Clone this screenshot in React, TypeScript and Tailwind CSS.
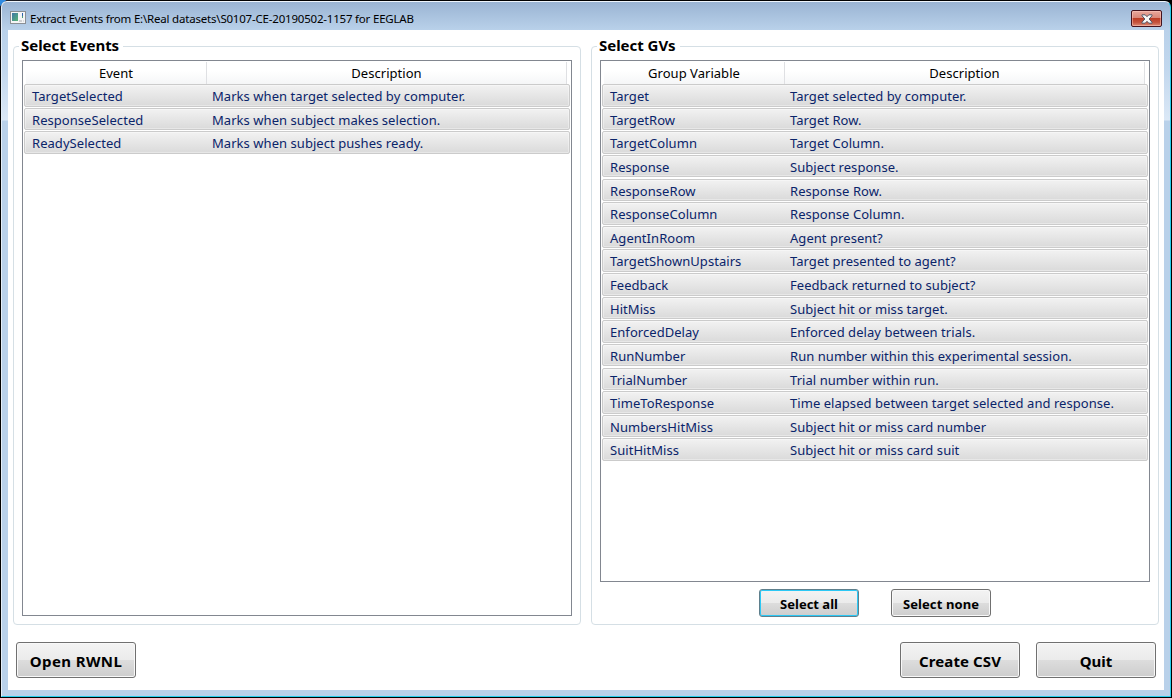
import type { ReactNode } from "react";

type Row = [string, string];

const events: Row[] = [
  ["TargetSelected", "Marks when target selected by computer."],
  ["ResponseSelected", "Marks when subject makes selection."],
  ["ReadySelected", "Marks when subject pushes ready."],
];

const variables: Row[] = [
  ["Target", "Target selected by computer."],
  ["TargetRow", "Target Row."],
  ["TargetColumn", "Target Column."],
  ["Response", "Subject response."],
  ["ResponseRow", "Response Row."],
  ["ResponseColumn", "Response Column."],
  ["AgentInRoom", "Agent present?"],
  ["TargetShownUpstairs", "Target presented to agent?"],
  ["Feedback", "Feedback returned to subject?"],
  ["HitMiss", "Subject hit or miss target."],
  ["EnforcedDelay", "Enforced delay between trials."],
  ["RunNumber", "Run number within this experimental session."],
  ["TrialNumber", "Trial number within run."],
  ["TimeToResponse", "Time elapsed between target selected and response."],
  ["NumbersHitMiss", "Subject hit or miss card number"],
  ["SuitHitMiss", "Subject hit or miss card suit"],
];

function WindowIcon() {
  return (
    <svg width="16" height="13" viewBox="0 0 16 13" className="block" shapeRendering="crispEdges">
      <defs>
        <linearGradient id="pane" x1="0" y1="0" x2="1" y2="1">
          <stop offset="0" stopColor="#3f76a8" />
          <stop offset="1" stopColor="#58b574" />
        </linearGradient>
      </defs>
      <rect width="16" height="13" fill="#8b8f94" />
      <rect x="1" y="1" width="14" height="11" fill="#f4f5f6" />
      <rect x="2" y="2" width="6" height="8" fill="url(#pane)" />
      <rect x="12" y="2" width="1" height="4" fill="#2e62ad" />
      <rect x="12" y="5" width="1" height="2" fill="#4d9b78" />
      <rect x="9" y="9" width="3" height="2" fill="#cfd1d3" />
      <rect x="13" y="9" width="1" height="2" fill="#dcdddf" />
    </svg>
  );
}

function CloseButton() {
  return (
    <button
      aria-label="Close"
      className="flex h-[17px] w-[31px] items-center justify-center rounded-[2px] border border-[#43131e] bg-[linear-gradient(#e8a89d,#d98678_47%,#bc3b24_47%,#c4523c_75%,#dc8b75)] shadow-[inset_0_0_0_1px_rgba(255,205,195,0.5)]"
    >
      <svg width="12" height="10" viewBox="0 0 12 10">
        <path
          d="M1 .8h3.2L6 2.7 7.8.8H11v1L8.1 5 11 8.2v1H7.8L6 7.3 4.2 9.2H1v-1L3.9 5 1 1.8z"
          fill="#f7f7f7"
          stroke="#535666"
          strokeWidth="1"
        />
      </svg>
    </button>
  );
}

function EventTable({ heading, rows }: { heading: string; rows: Row[] }) {
  return (
    <div className="min-h-0 flex-1 border border-[#828790] bg-white px-px pt-px">
      <div className="mr-[3px] ml-[2px] flex h-[22px] bg-gradient-to-b from-white from-40% to-[#f5f6f7] text-center text-[13px] leading-[22px] tracking-[0.03px] text-black">
        <div className="w-[181px] border-r border-[#dfe0e3]">{heading}</div>
        <div className="flex-1 border-r border-[#dfe0e3]">Description</div>
      </div>
      {rows.map(([name, description]) => (
        <div key={name} className="h-[23.63px]">
          <div className="flex h-[22.6px] rounded-[2px] border border-[#cbcbcb] bg-gradient-to-b from-[#f2f2f2] to-[#dadada] pl-[7px] text-[13px] leading-[22px] tracking-[0.05px] text-[#0a246a] shadow-[inset_0_0_0_1px_rgba(255,255,255,0.35)]">
            <div className="w-[180px]">{name}</div>
            <div className="whitespace-nowrap">{description}</div>
          </div>
        </div>
      ))}
    </div>
  );
}

function Group({ title, className, children }: { title: string; className: string; children: ReactNode }) {
  return (
    <section className={`flex flex-col rounded-[4px] border border-[#d5dfe5] px-[8px] ${className}`}>
      <h2 className="-mt-[11px] mb-[4px] -ml-[3px] h-[20px] self-start bg-white pr-[4px] pl-[2px] text-[15px] leading-[18px] font-bold tracking-[-0.03px] text-black">
        {title}
      </h2>
      {children}
    </section>
  );
}

function Button({ label, className }: { label: string; className: string }) {
  return (
    <button
      className={`rounded-[3px] border bg-[linear-gradient(#f3f3f3,#ebebeb_50%,#dddddd_50%,#cdcdcd)] font-bold text-black ${className}`}
    >
      {label}
    </button>
  );
}

export default function App() {
  return (
    <div className="h-[698px] w-[1172px] bg-black bg-[linear-gradient(135deg,#2f8ae0_4px,#20222b_5px,#000000_60px)] p-px font-['Noto_Sans',sans-serif]">
      <div className="flex h-[696px] flex-col rounded-t-[6px] border border-t-[#eef5fc] border-r-[#27cdec] border-b-[#27cdec] border-l-[#e4eef8] bg-[linear-gradient(#9ab4d3,#b9d1ea_28px,#c3d8ee_70px,#dbe8f6_118px,#b9d1ea_119px)] px-[6px]">
        <header className="flex h-[28px] shrink-0 items-start justify-between pl-px">
          <div className="flex">
            <div className="pt-[9px] pl-px">
              <WindowIcon />
            </div>
            <h1 className="ml-[4px] pt-[8px] text-[11.5px] leading-[17px] tracking-[-0.2px] whitespace-nowrap text-black">
              Extract Events from E:\Real datasets\S0107-CE-20190502-1157 for EEGLAB
            </h1>
          </div>
          <div className="pt-[8px] pr-[2px]">
            <CloseButton />
          </div>
        </header>
        <main className="flex h-[660px] shrink-0 flex-col bg-white pt-[16px]">
          <div className="flex h-[579px] pl-[5px]">
            <Group title="Select Events" className="w-[568px] pb-[8px]">
              <EventTable heading="Event" rows={events} />
            </Group>
            <Group title="Select GVs" className="ml-[10px] w-[568px] pb-[7px]">
              <EventTable heading="Group Variable" rows={variables} />
              <div className="mt-[7px] flex h-[28px] pl-[159px]">
                <Button
                  label="Select all"
                  className="w-[100px] border-[#5f7f8c] pt-[3px] text-[13px] shadow-[inset_0_0_0_1px_#2cc8f5]"
                />
                <Button
                  label="Select none"
                  className="ml-[32px] w-[100px] border-[#707070] pt-[3px] text-[13px] tracking-[0.1px] shadow-[inset_0_0_0_1px_#f8f8f8]"
                />
              </div>
            </Group>
          </div>
          <footer className="mt-[17px] flex h-[36px] px-[8px]">
            <Button
              label="Open RWNL"
              className="w-[120px] border-[#707070] pt-[2px] text-[15px] tracking-[0.4px] shadow-[inset_0_0_0_1px_#f8f8f8]"
            />
            <Button
              label="Create CSV"
              className="ml-auto w-[120px] border-[#707070] pt-[2px] text-[15px] tracking-[0.1px] shadow-[inset_0_0_0_1px_#f8f8f8]"
            />
            <Button
              label="Quit"
              className="ml-[16px] w-[120px] border-[#707070] pt-[2px] text-[15px] shadow-[inset_0_0_0_1px_#f8f8f8]"
            />
          </footer>
        </main>
      </div>
    </div>
  );
}
